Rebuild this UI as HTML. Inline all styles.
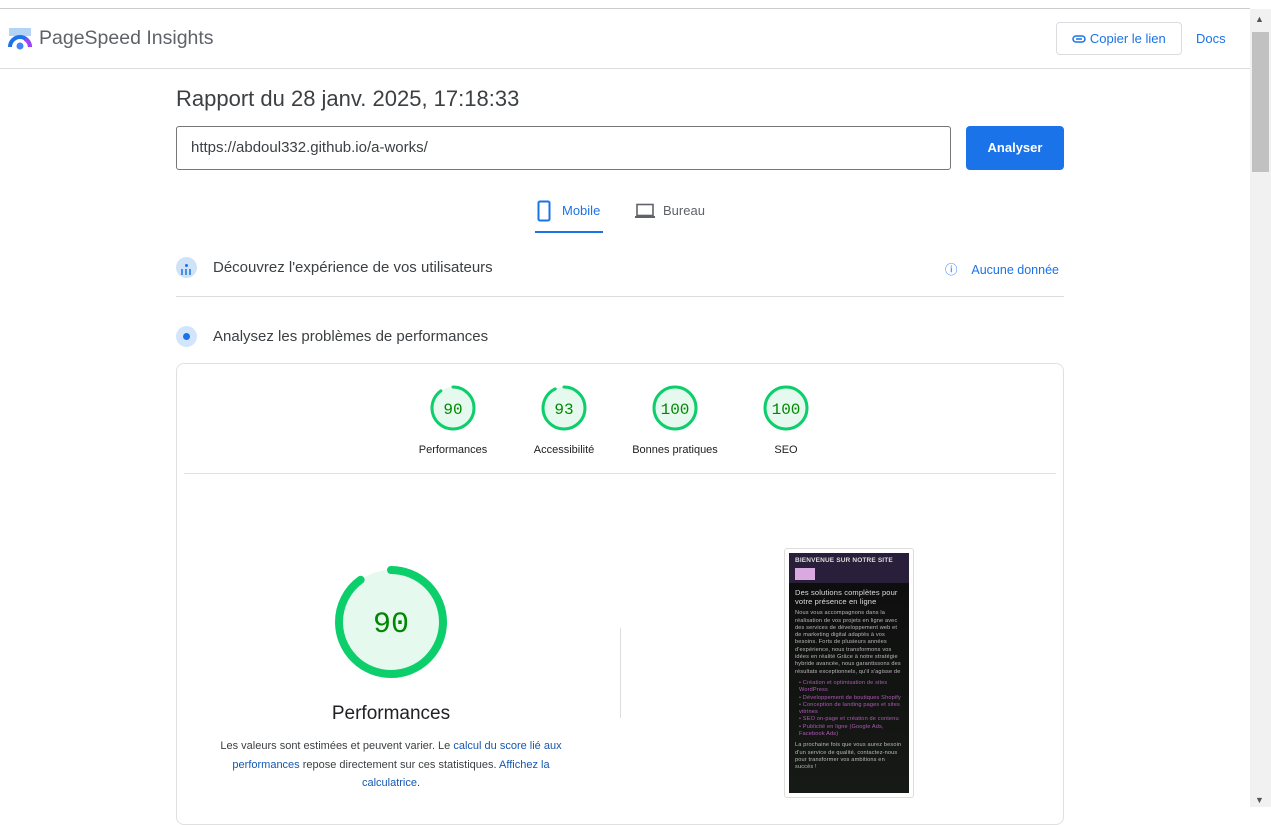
<!DOCTYPE html><html><head><meta charset="utf-8"><style>
body{margin:0;width:1271px;height:807px;overflow:hidden;font-family:"Liberation Sans",Arial,sans-serif;background:#fff;position:relative;color:#202124}
.a{position:absolute}
.lnk{color:#1a73e8}
</style></head><body>
<div class="a" style="left:0;top:8px;width:1250px;border-top:1px solid #ccc"></div>
<div class="a" style="left:0;top:68px;width:1250px;border-top:1px solid #ddd"></div>
<div class="a" style="left:1250px;top:9px;width:21px;height:798px;background:#f1f1f1"></div>
<div class="a" style="left:1252px;top:32px;width:17px;height:140px;background:#c1c1c1"></div>
<div class="a" style="left:1255px;top:14px;font-size:9px;color:#555">▲</div>
<div class="a" style="left:1255px;top:795px;font-size:9px;color:#555">▼</div>
<svg class="a" style="left:8px;top:27px" width="24" height="24" viewBox="0 0 24 24"><rect x="1" y="1" width="22" height="8" fill="#b3d4f5"/><path d="M2 20a10 10 0 0 1 20 0" fill="none" stroke="#1a73e8" stroke-width="4"/><path d="M17 12a10 10 0 0 1 5 8" fill="none" stroke="#a142f4" stroke-width="4"/><circle cx="12" cy="19" r="3.5" fill="#4285f4"/></svg>
<div class="a" style="left:39px;top:27px;font-size:19.5px;color:#5f6368">PageSpeed Insights</div>
<div class="a" style="left:1056px;top:22px;width:124px;height:31px;border:1px solid #dadce0;border-radius:4px;font-size:13px;line-height:31px;text-align:center"><svg width="14" height="8" style="vertical-align:0"><rect x="1" y="1" width="12" height="6" rx="3" fill="none" stroke="#1a73e8" stroke-width="1.5"/><line x1="4" y1="4" x2="10" y2="4" stroke="#1a73e8" stroke-width="1.5"/></svg> <span class="lnk">Copier le lien</span></div>
<div class="a lnk" style="left:1196px;top:31px;font-size:13px">Docs</div>
<div class="a" style="left:176px;top:86px;font-size:22px;color:#3c4043">Rapport du 28 janv. 2025, 17:18:33</div>
<div class="a" style="left:176px;top:126px;height:44px;border:1px solid #777;border-radius:3px;font-size:15px;line-height:42px;padding-left:14px;box-sizing:border-box;width:775px;color:#3c4043">https://abdoul332.github.io/a-works/</div>
<div class="a" style="left:966px;top:126px;width:98px;height:44px;background:#1a73e8;border-radius:4px;color:#fff;font-weight:bold;font-size:13px;line-height:44px;text-align:center">Analyser</div>
<svg class="a" style="left:537px;top:200px" width="14" height="22"><rect x="1.5" y="1.5" width="11" height="19" rx="1.5" fill="none" stroke="#1a73e8" stroke-width="2"/></svg>
<div class="a lnk" style="left:562px;top:203px;font-size:13px">Mobile</div>
<div class="a" style="left:535px;top:231px;width:68px;height:2px;background:#1a73e8"></div>
<svg class="a" style="left:634px;top:203px" width="22" height="16"><rect x="3" y="1.5" width="16" height="11" fill="none" stroke="#5f6368" stroke-width="1.6"/><rect x="1" y="13" width="20" height="2" fill="#5f6368"/></svg>
<div class="a" style="left:663px;top:203px;font-size:13px;color:#5f6368">Bureau</div>
<div class="a" style="left:176px;top:257px;width:21px;height:21px;border-radius:50%;background:#cfe2f8"></div>
<div class="a" style="left:185px;top:264px;width:3px;height:3px;border-radius:50%;background:#1a73e8"></div>
<div class="a" style="left:181px;top:269px;width:2px;height:6px;background:#4a90e2"></div>
<div class="a" style="left:185px;top:269px;width:2px;height:6px;background:#4a90e2"></div>
<div class="a" style="left:189px;top:269px;width:2px;height:6px;background:#4a90e2"></div>
<div class="a" style="left:213px;top:259px;font-size:15px;color:#3c4043">Découvrez l'expérience de vos utilisateurs</div>
<div class="a lnk" style="left:945px;top:259px;font-size:12.5px">ⓘ &nbsp;&nbsp;&nbsp;Aucune donnée</div>
<div class="a" style="left:176px;top:296px;width:888px;border-top:1px solid #ddd"></div>
<div class="a" style="left:176px;top:326px;width:21px;height:21px;border-radius:50%;background:#d2e5fb"></div>
<div class="a" style="left:183px;top:333px;width:7px;height:7px;border-radius:50%;background:#1a73e8"></div>
<div class="a" style="left:213px;top:328px;font-size:15px;color:#3c4043">Analysez les problèmes de performances</div>
<div class="a" style="left:176px;top:363px;width:886px;height:460px;border:1px solid #e0e0e0;border-radius:8px"></div>
<div class="a" style="left:184px;top:473px;width:872px;border-top:1px solid #e0e0e0"></div>
<svg class="a" style="left:0;top:0" width="1250" height="807" font-family="Liberation Mono,monospace">
<g fill="#e6f9ee"><circle cx="453" cy="408" r="21"/><circle cx="564" cy="408" r="21"/><circle cx="675" cy="408" r="21"/><circle cx="786" cy="408" r="21"/><circle cx="391" cy="622" r="52"/></g>
<g fill="none" stroke="#0cce6b" stroke-linecap="round">
<circle cx="453" cy="408" r="21" stroke-width="3" stroke-dasharray="118.8 200" transform="rotate(-90 453 408)"/>
<circle cx="564" cy="408" r="21" stroke-width="3" stroke-dasharray="122.7 200" transform="rotate(-90 564 408)"/>
<circle cx="675" cy="408" r="21" stroke-width="3"/>
<circle cx="786" cy="408" r="21" stroke-width="3"/>
<circle cx="391" cy="622" r="52" stroke-width="8" stroke-dasharray="294 400" transform="rotate(-90 391 622)"/>
</g>
<g fill="#008800" text-anchor="middle" font-size="16"><text x="453" y="414">90</text><text x="564" y="414">93</text><text x="675" y="414">100</text><text x="786" y="414">100</text><text x="391" y="632" font-size="30">90</text></g>
<g fill="#202124" font-family="Liberation Sans,sans-serif" font-size="11" text-anchor="middle"><text x="453" y="453">Performances</text><text x="564" y="453">Accessibilité</text><text x="675" y="453">Bonnes pratiques</text><text x="786" y="453">SEO</text></g>
</svg>
<div class="a" style="left:291px;top:703px;width:200px;text-align:center;font-size:19px">Performances</div>
<div class="a" style="left:210px;top:737px;width:362px;text-align:center;font-size:11px;line-height:18.5px;color:#3c4043">Les valeurs sont estimées et peuvent varier. Le <span style="color:#1558b0">calcul du score lié aux performances</span> repose directement sur ces statistiques. <span style="color:#1558b0">Affichez la calculatrice</span>.</div>
<div class="a" style="left:620px;top:628px;height:90px;border-left:1px solid #ddd"></div>
<div class="a" style="left:784px;top:548px;width:128px;height:248px;border:1px solid #ddd;border-radius:3px"></div>
<div class="a" style="left:789px;top:553px;width:120px;height:240px;background:linear-gradient(#2a1f3a 0,#2a1f3a 30px,#0e0e0e 30px,#161a16 100%);color:#ddd;font-size:5.6px;letter-spacing:0.15px;line-height:7.3px;overflow:hidden">
<div style="font-weight:bold;font-size:6.5px;margin:4px 6px">BIENVENUE SUR NOTRE SITE</div>
<div style="background:#d9a9e0;width:20px;height:12px;margin-left:6px"></div>
<div style="font-size:7.5px;line-height:9px;margin:8px 6px 4px">Des solutions complètes pour votre présence en ligne</div>
<div style="margin:0 6px;color:#bbb">Nous vous accompagnons dans la réalisation de vos projets en ligne avec des services de développement web et de marketing digital adaptés à vos besoins. Forts de plusieurs années d'expérience, nous transformons vos idées en réalité Grâce à notre stratégie hybride avancée, nous garantissons des résultats exceptionnels, qu'il s'agisse de</div>
<div style="margin:4px 6px 4px 10px;color:#b05ab8">• Création et optimisation de sites WordPress<br>• Développement de boutiques Shopify<br>• Conception de landing pages et sites vitrines<br>• SEO on-page et création de contenu<br>• Publicité en ligne (Google Ads, Facebook Ads)</div>
<div style="margin:0 6px;color:#bbb">La prochaine fois que vous aurez besoin d'un service de qualité, contactez-nous pour transformer vos ambitions en succès !</div>
</div>
</body></html>
